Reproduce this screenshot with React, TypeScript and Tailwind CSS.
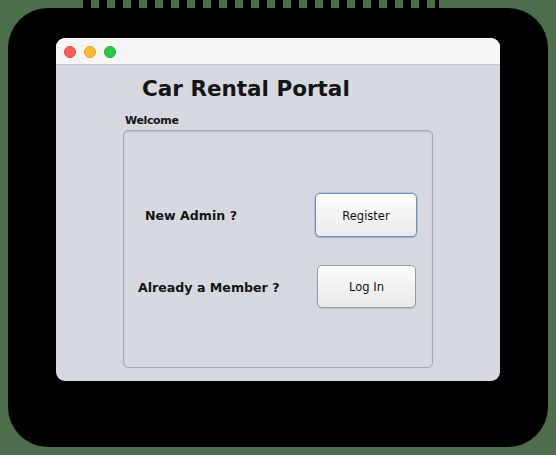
import React from "react";

export default function App() {
  const font = { fontFamily: '"DejaVu Sans", Verdana, sans-serif' };
  return (
    <div className="w-[556px] h-[455px] bg-[#4d6e4b] flex flex-col overflow-hidden" style={font}>
      <div className="h-[8px] ml-[83px] w-[356px] bg-[repeating-linear-gradient(90deg,#000_0px,#000_8px,transparent_8px,transparent_16px)]" />
      <div className="mx-[8px] h-[439px] bg-black rounded-[40px] pl-[48px] pr-[48px] pt-[30px]">
        <div className="w-[444px] h-[343px] rounded-[9px] overflow-hidden flex flex-col bg-[#d6d9df]">
          {/* title bar */}
          <div className="h-[27px] bg-[#f6f6f6] border-b border-[#c6c7ca] flex items-center gap-[8px] pl-[8px] pt-[1px]">
            <div className="w-[12px] h-[12px] rounded-full bg-[#fe5f57] border border-[#e2463f]" />
            <div className="w-[12px] h-[12px] rounded-full bg-[#febc2e] border border-[#dea123]" />
            <div className="w-[12px] h-[12px] rounded-full bg-[#28c840] border border-[#1aab29]" />
          </div>
          {/* content */}
          <div className="flex flex-col pt-[11px]">
            <div className="pl-[86px] text-[21.5px] leading-[26px] font-bold text-[#141414]">Car Rental Portal</div>
            <div className="pl-[69px] mt-[12px] text-[11px] leading-[14px] font-bold tracking-[-0.35px] text-[#141414]">Welcome</div>
            <div className="ml-[67px] mt-[2px] w-[310px] h-[238px] rounded-[5px] border border-[#a7a9ae] shadow-[inset_0_1px_2px_rgba(0,0,0,0.12)] flex flex-col pt-[62px]">
              <div className="flex items-center">
                <div className="w-[191px] pl-[21px] pt-[2px] text-[12.6px] leading-[16px] font-bold text-[#141414]">New Admin ?</div>
                <button className="w-[102px] h-[44px] pt-[3px] rounded-[5px] border border-[#6f90bd] bg-[linear-gradient(#fdfdfd,#ebebec)] shadow-[0_0_0_1px_rgba(120,155,200,0.35),0_1px_1px_rgba(0,0,0,0.15)] text-[11.5px] text-[#141414] flex items-center justify-center">
                  Register
                </button>
              </div>
              <div className="flex items-center mt-[28px]">
                <div className="w-[193px] pl-[14px] pt-[2px] text-[12.6px] leading-[16px] font-bold text-[#141414]">Already a Member ?</div>
                <button className="w-[99px] h-[43px] pt-[3px] rounded-[5px] border border-[#9a9b9e] bg-[linear-gradient(#fcfcfc,#e9e9ea)] shadow-[0_1px_1px_rgba(0,0,0,0.12)] text-[11.5px] text-[#141414] flex items-center justify-center">
                  Log In
                </button>
              </div>
            </div>
          </div>
        </div>
      </div>
    </div>
  );
}
